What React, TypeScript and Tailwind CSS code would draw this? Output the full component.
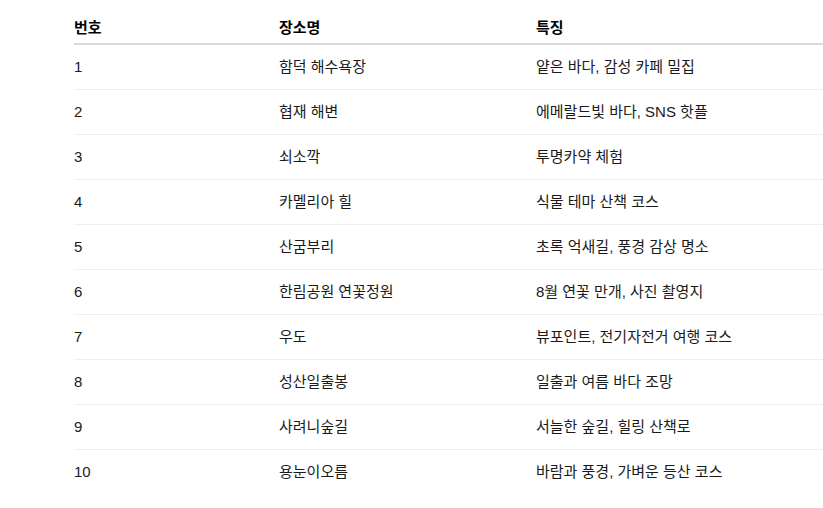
const rows: [string, string, string][] = [
  ["1", "함덕 해수욕장", "얕은 바다, 감성 카페 밀집"],
  ["2", "협재 해변", "에메랄드빛 바다, SNS 핫플"],
  ["3", "쇠소깍", "투명카약 체험"],
  ["4", "카멜리아 힐", "식물 테마 산책 코스"],
  ["5", "산굼부리", "초록 억새길, 풍경 감상 명소"],
  ["6", "한림공원 연꽃정원", "8월 연꽃 만개, 사진 촬영지"],
  ["7", "우도", "뷰포인트, 전기자전거 여행 코스"],
  ["8", "성산일출봉", "일출과 여름 바다 조망"],
  ["9", "사려니숲길", "서늘한 숲길, 힐링 산책로"],
  ["10", "용눈이오름", "바람과 풍경, 가벼운 등산 코스"],
];

export default function App() {
  return (
    <div
      className="min-h-screen bg-white pl-[74px] pt-[6px] text-[15px] text-[#1a1a1a]"
      style={{ fontFamily: '"Liberation Sans", "Noto Sans CJK KR", sans-serif' }}
    >
      <div className="w-[760px]">
        <div className="grid h-[39px] grid-cols-[205px_257px_1fr] items-end border-b-2 border-[#dadada] pb-[4px] font-bold text-black">
          <div>번호</div>
          <div>장소명</div>
          <div>특징</div>
        </div>
        {rows.map(([n, name, desc], i) => (
          <div
            key={n}
            className={
              i < rows.length - 1
                ? "grid h-[45px] grid-cols-[205px_257px_1fr] items-center border-b border-[#efefef]"
                : "grid h-[45px] grid-cols-[205px_257px_1fr] items-center"
            }
          >
            <div>{n}</div>
            <div>{name}</div>
            <div>{desc}</div>
          </div>
        ))}
      </div>
    </div>
  );
}
